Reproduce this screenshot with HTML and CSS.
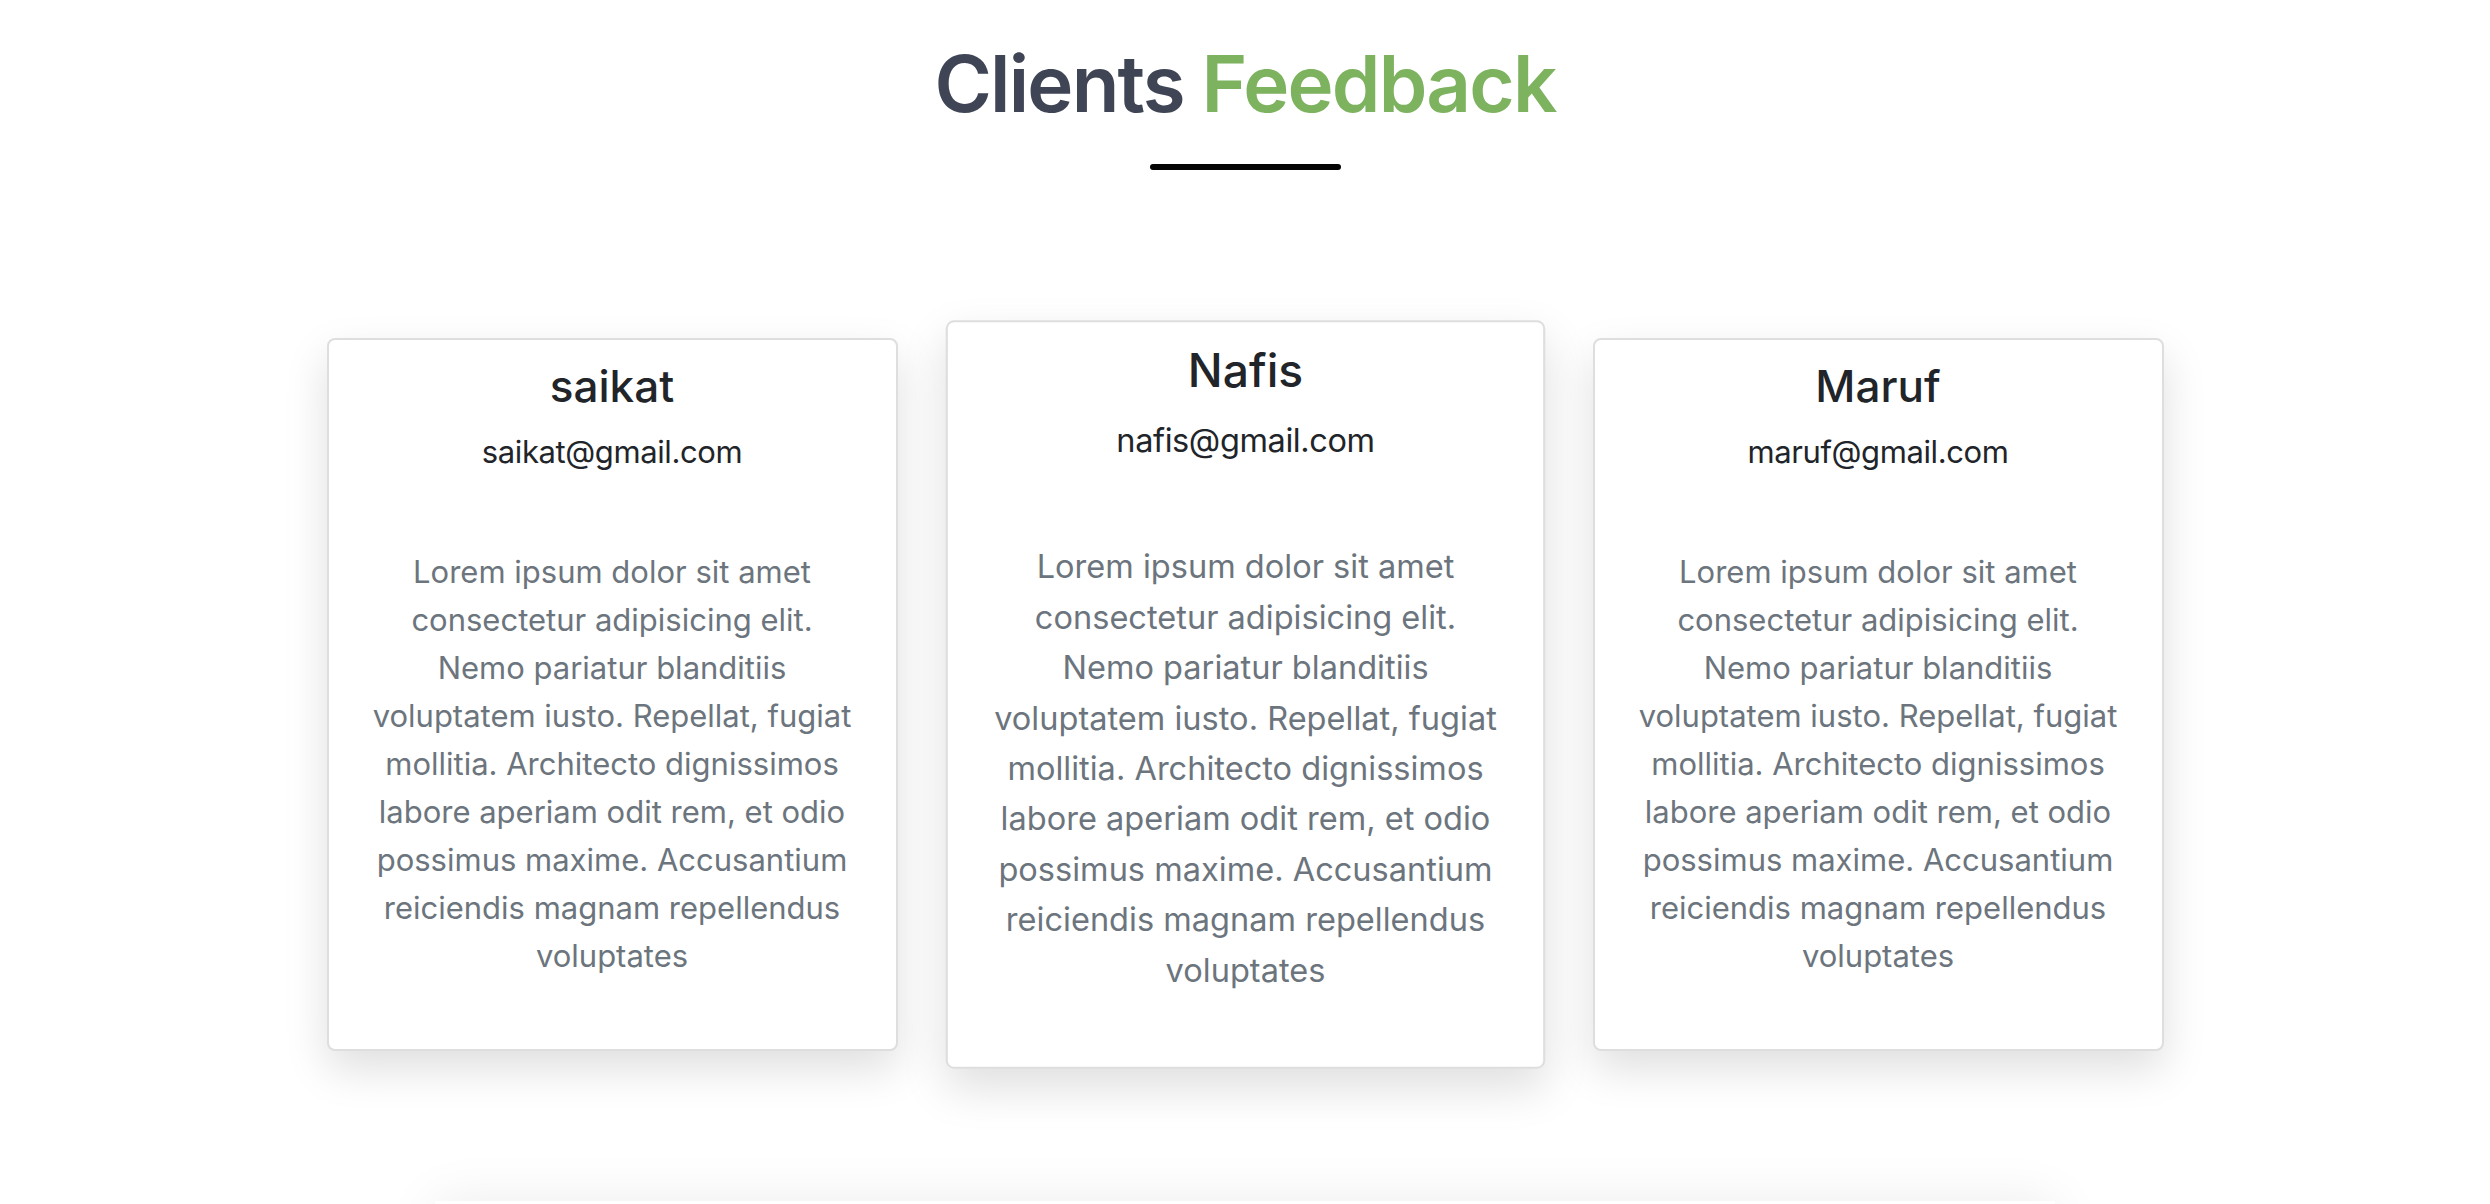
FILE: index.html
```html
<!DOCTYPE html>
<html lang="en">
<head>
<meta charset="utf-8">
<title>Clients Feedback</title>
<link rel="stylesheet" href="styles.css">
</head>
<body>
<section class="feedback">
  <header class="feedback-head">
    <h2 class="feedback-title">Clients <span class="accent">Feedback</span></h2>
    <div class="title-bar"></div>
  </header>
  <div class="card-row">
    <article class="card">
      <h4 class="card-name">saikat</h4>
      <p class="card-email">saikat@gmail.com</p>
      <p class="card-text">Lorem ipsum dolor sit amet consectetur adipisicing elit. Nemo pariatur blanditiis voluptatem iusto. Repellat, fugiat mollitia. Architecto dignissimos labore aperiam odit rem, et odio possimus maxime. Accusantium reiciendis magnam repellendus voluptates</p>
    </article>
    <article class="card card-featured">
      <h4 class="card-name">Nafis</h4>
      <p class="card-email">nafis@gmail.com</p>
      <p class="card-text">Lorem ipsum dolor sit amet consectetur adipisicing elit. Nemo pariatur blanditiis voluptatem iusto. Repellat, fugiat mollitia. Architecto dignissimos labore aperiam odit rem, et odio possimus maxime. Accusantium reiciendis magnam repellendus voluptates</p>
    </article>
    <article class="card">
      <h4 class="card-name">Maruf</h4>
      <p class="card-email">maruf@gmail.com</p>
      <p class="card-text">Lorem ipsum dolor sit amet consectetur adipisicing elit. Nemo pariatur blanditiis voluptatem iusto. Repellat, fugiat mollitia. Architecto dignissimos labore aperiam odit rem, et odio possimus maxime. Accusantium reiciendis magnam repellendus voluptates</p>
    </article>
  </div>
</section>
<section class="next-section"></section>
</body>
</html>
```

FILE: styles.css
```css
* { box-sizing: border-box; }

html, body {
  margin: 0;
  padding: 0;
  background: #ffffff;
}

body {
  font-family: Inter, "Noto Sans", "Liberation Sans", sans-serif;
  color: #212529;
  overflow: hidden;
}

.feedback {
  padding-top: 37px;
}

.feedback-head {
  display: flex;
  flex-direction: column;
  align-items: center;
}

.feedback-title {
  margin: 0;
  font-size: 78px;
  line-height: 1.2;
  font-weight: 600;
  letter-spacing: -1.8px;
  color: #3f4555;
}

.accent {
  color: #7db25f;
}

.title-bar {
  width: 191px;
  height: 6px;
  margin-top: 33px;
  background: #050505;
  border-radius: 3px;
}

.card-row {
  display: flex;
  justify-content: center;
  align-items: flex-start;
  gap: 62px;
  margin-top: 168px;
}

.card {
  width: 571px;
  height: 713px;
  background: #ffffff;
  border: 2px solid #dedede;
  border-radius: 8px;
  padding: 20px 37px 0;
  text-align: center;
  box-shadow: 0 18px 44px rgba(0, 0, 0, 0.13);
}

.card-featured {
  transform: scale(1.05);
}

.card-name {
  margin: 0;
  font-size: 44px;
  line-height: 1.2;
  font-weight: 500;
  color: #212529;
}

.card-email {
  margin: 15px 0 0;
  font-size: 31px;
  line-height: 50px;
  font-weight: 400;
  letter-spacing: -0.4px;
  color: #212529;
}

.card-text {
  margin: 71px 0 0;
  font-size: 31px;
  line-height: 48px;
  color: #6c757d;
}

.next-section {
  width: 1620px;
  height: 300px;
  margin: 150px auto 0;
  background: #ffffff;
  box-shadow: 0 0 50px rgba(0, 0, 0, 0.08);
}
```
